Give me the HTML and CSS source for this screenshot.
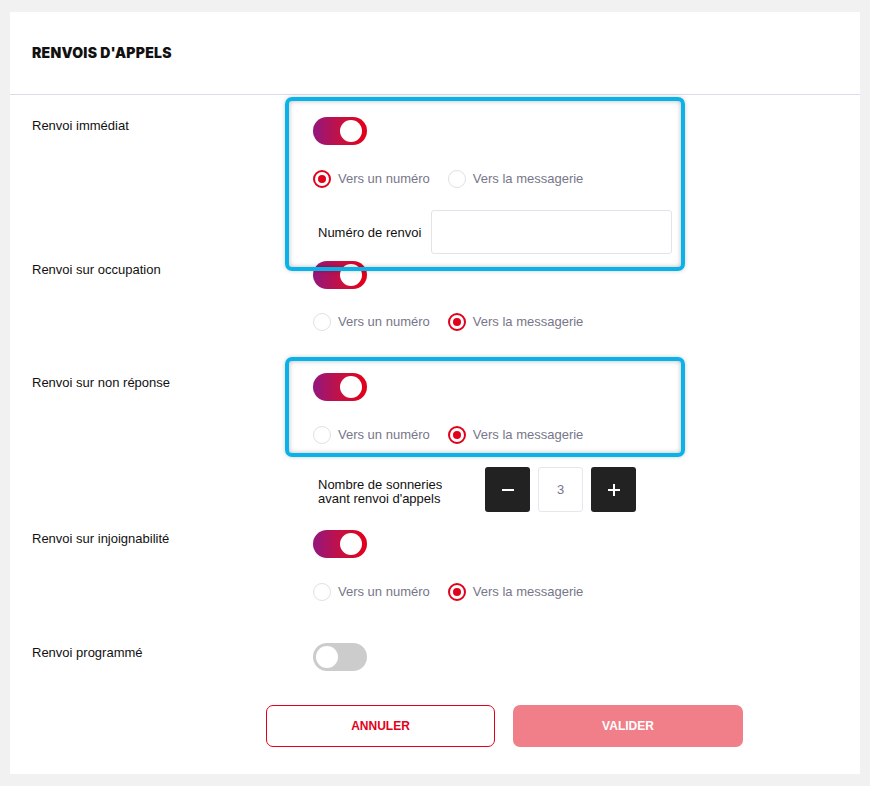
FILE: index.html
```html
<!DOCTYPE html>
<html lang="fr">
<head>
<meta charset="utf-8">
<title>Renvois d'appels</title>
<link rel="stylesheet" href="styles.css">
</head>
<body>
<div class="card">
  <div class="card-header"><h1 class="title">RENVOIS D'APPELS</h1></div>
  <div class="card-body">

    <div class="row row-field">
      <div class="row-label">Renvoi immédiat</div>
      <div class="row-controls">
        <span class="toggle on"><span class="knob"></span></span>
        <div class="radios">
          <label class="radio checked"><span class="dot"></span><span class="radio-text">Vers un numéro</span></label>
          <label class="radio"><span class="dot"></span><span class="radio-text">Vers la messagerie</span></label>
        </div>
        <div class="field">
          <span class="field-label">Numéro de renvoi</span>
          <span class="input"></span>
        </div>
      </div>
    </div>

    <div class="row">
      <div class="row-label">Renvoi sur occupation</div>
      <div class="row-controls">
        <span class="toggle on"><span class="knob"></span></span>
        <div class="radios tight">
          <label class="radio"><span class="dot"></span><span class="radio-text">Vers un numéro</span></label>
          <label class="radio checked"><span class="dot"></span><span class="radio-text">Vers la messagerie</span></label>
        </div>
      </div>
    </div>

    <div class="row row-stepper">
      <div class="row-label row-label-low">Renvoi sur non réponse</div>
      <div class="row-controls">
        <span class="toggle on"><span class="knob"></span></span>
        <div class="radios">
          <label class="radio"><span class="dot"></span><span class="radio-text">Vers un numéro</span></label>
          <label class="radio checked"><span class="dot"></span><span class="radio-text">Vers la messagerie</span></label>
        </div>
        <div class="stepper-field">
          <div class="stepper-label">Nombre de sonneries<br>avant renvoi d'appels</div>
          <div class="stepper">
            <span class="step-btn"><svg width="14" height="14" viewBox="0 0 14 14"><path d="M1 7h12" stroke="#fff" stroke-width="2"/></svg></span>
            <span class="step-value">3</span>
            <span class="step-btn"><svg width="14" height="14" viewBox="0 0 14 14"><path d="M1 7h12M7 1v12" stroke="#fff" stroke-width="2"/></svg></span>
          </div>
        </div>
      </div>
    </div>

    <div class="row">
      <div class="row-label">Renvoi sur injoignabilité</div>
      <div class="row-controls">
        <span class="toggle on"><span class="knob"></span></span>
        <div class="radios">
          <label class="radio"><span class="dot"></span><span class="radio-text">Vers un numéro</span></label>
          <label class="radio checked"><span class="dot"></span><span class="radio-text">Vers la messagerie</span></label>
        </div>
      </div>
    </div>

    <div class="row row-last">
      <div class="row-label row-label-low">Renvoi programmé</div>
      <div class="row-controls">
        <span class="toggle off"><span class="knob"></span></span>
      </div>
    </div>

    <div class="actions">
      <button class="btn btn-outline">ANNULER</button>
      <button class="btn btn-primary">VALIDER</button>
    </div>
  </div>

  <div class="highlight highlight-1"></div>
  <div class="highlight highlight-2"></div>
</div>
</body>
</html>
```
FILE: styles.css
```css
* { box-sizing: border-box; }
html, body { margin: 0; padding: 0; }
body {
  background: #f1f1f1;
  padding: 12px 10px;
  font-family: "Liberation Sans", Arial, sans-serif;
  font-size: 13px;
  color: #111;
}
.card {
  position: relative;
  background: #fff;
  height: 762px;
}
.card-header {
  height: 83px;
  border-bottom: 1px solid #dcdbe8;
  padding: 0 22px;
  display: flex;
  align-items: center;
}
.title {
  margin: 0;
  font-family: Inter, "Liberation Sans", sans-serif;
  font-weight: 900;
  font-size: 14px;
  letter-spacing: 0.25px;
  color: #111;
  padding-bottom: 2px;
}
.card-body {
  padding: 22px 22px 27px;
}
.row {
  display: grid;
  grid-template-columns: 281px 1fr;
  padding-bottom: 42px;
}
.row-field { padding-bottom: 7px; }
.row-stepper { padding-bottom: 18px; }
.row-last { padding-bottom: 0; }
.row-label {
  line-height: 16px;
  padding-top: 1px;
  color: #111;
}
.row-label-low { padding-top: 2px; }
.row-controls { display: flex; flex-direction: column; align-items: flex-start; }

.toggle {
  width: 54px;
  height: 28px;
  border-radius: 14px;
  display: flex;
  align-items: center;
  padding: 0 5px 0 4px;
}
.toggle .knob {
  width: 22px;
  height: 22px;
  border-radius: 50%;
  background: #fff;
}
.toggle.on {
  background: linear-gradient(90deg, #92177f 0%, #c8103f 55%, #e2001a 100%);
  justify-content: flex-end;
}
.toggle.off {
  background: #cccccc;
  justify-content: flex-start;
  padding-left: 3px;
}

.radios {
  display: flex;
  margin-top: 25px;
  height: 18px;
  align-items: center;
}
.radios.tight { margin-top: 24px; }
.radio {
  display: flex;
  align-items: center;
  margin-right: 18px;
  color: #777689;
  line-height: 18px;
}
.radio .dot {
  width: 18px;
  height: 18px;
  border-radius: 50%;
  border: 1.5px solid #e1e1e4;
  margin-right: 7px;
  display: flex;
  align-items: center;
  justify-content: center;
}
.radio.checked .dot {
  border: 2px solid #e2001a;
}
.radio.checked .dot::after {
  content: "";
  width: 8px;
  height: 8px;
  border-radius: 50%;
  background: #e2001a;
}

.field {
  margin-top: 22px;
  display: flex;
  align-items: center;
  padding-left: 5px;
}
.field-label { width: 113px; color: #111; }
.input {
  width: 241px;
  height: 44px;
  border: 1px solid #e2e2ea;
  border-radius: 3px;
  background: #fff;
}

.stepper-field {
  margin-top: 23px;
  display: flex;
  align-items: center;
  padding-left: 5px;
}
.stepper-label {
  width: 167px;
  line-height: 14px;
  padding-top: 4px;
  color: #111;
}
.stepper { display: flex; gap: 8px; }
.step-btn {
  width: 45px;
  height: 45px;
  background: #222;
  border-radius: 3px;
  display: flex;
  align-items: center;
  justify-content: center;
}
.step-value {
  width: 45px;
  height: 45px;
  border: 1px solid #e6e6ec;
  border-radius: 3px;
  display: flex;
  align-items: center;
  justify-content: center;
  color: #777689;
}

.actions {
  margin-top: 34px;
  padding-left: 234px;
  display: flex;
  gap: 18px;
}
.btn {
  width: 229px;
  height: 42px;
  border-radius: 7px;
  font-family: "Liberation Sans", Arial, sans-serif;
  font-weight: bold;
  font-size: 12px;
  cursor: pointer;
}
.btn-outline {
  background: #fff;
  border: 1px solid #e2001a;
  color: #e2001a;
}
.btn-primary {
  width: 230px;
  background: #f07f8a;
  border: none;
  color: #fff;
}

.highlight {
  position: absolute;
  left: 275px;
  width: 400px;
  border: 4px solid #0ab2ea;
  border-radius: 7px;
  box-shadow: inset 0 0 5px rgba(0,0,0,0.28), 0 0 4px rgba(0,0,0,0.2);
  pointer-events: none;
}
.highlight-1 { top: 85px; height: 174px; }
.highlight-2 { top: 345px; height: 100px; }
```
